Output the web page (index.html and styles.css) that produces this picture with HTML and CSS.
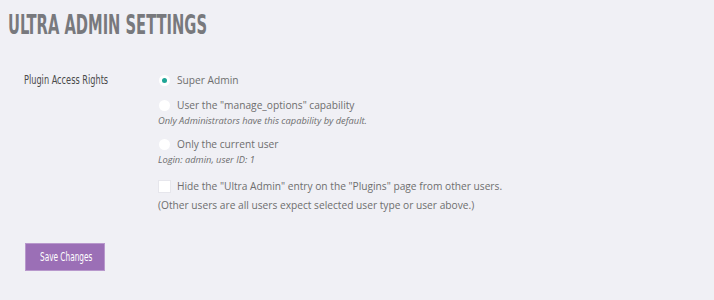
FILE: index.html
```html
<!DOCTYPE html>
<html>
<head>
<meta charset="utf-8">
<link rel="stylesheet" href="styles.css">
</head>
<body>
<div class="wrap">
  <h1 class="title"><span class="narrow">ULTRA ADMIN SETTINGS</span></h1>
  <div class="form-row">
    <div class="label"><span class="narrow">Plugin Access Rights</span></div>
    <div class="options">
      <label class="opt"><span class="radio checked"></span><span>Super Admin</span></label>
      <label class="opt opt-gap"><span class="radio"></span><span>User the "manage_options" capability</span></label>
      <div class="desc">Only Administrators have this capability by default.</div>
      <label class="opt opt-gap"><span class="radio"></span><span>Only the current user</span></label>
      <div class="desc">Login: admin, user ID: 1</div>
      <label class="opt opt-gap2"><span class="check"></span><span>Hide the "Ultra Admin" entry on the "Plugins" page from other users.</span></label>
      <div class="note">(Other users are all users expect selected user type or user above.)</div>
    </div>
  </div>
  <div class="actions">
    <button class="btn"><span class="narrow">Save Changes</span></button>
  </div>
</div>
</body>
</html>
```
FILE: styles.css
```css
html, body {
  margin: 0;
  padding: 0;
  background: #f0f0f5;
}
body {
  font-family: "Open Sans", "Liberation Sans", sans-serif;
  color: #6e6e6e;
}
.wrap {
  padding: 8px 8px 0 8px;
}
.narrow {
  display: inline-block;
  white-space: nowrap;
  transform-origin: left center;
}
.title {
  margin: 0;
  font-family: "DejaVu Sans Condensed", sans-serif;
  font-weight: bold;
  font-size: 27px;
  line-height: 34px;
  color: #78797d;
}
.title .narrow {
  transform: scaleX(0.605);
}
.form-row {
  display: flex;
  padding: 30px 0 0 16px;
}
.label {
  width: 134px;
  font-family: "DejaVu Sans Condensed", sans-serif;
  font-size: 13px;
  color: #4a4a4a;
  line-height: 16px;
}
.label .narrow {
  transform: scaleX(0.7);
}
.options {
  display: flex;
  flex-direction: column;
}
.opt {
  display: flex;
  align-items: center;
  font-size: 10.2px;
  line-height: 16px;
  color: #6e6e6e;
}
.opt-gap { margin-top: 9px; }
.opt-gap2 { margin-top: 12px; }
.radio {
  width: 11px;
  height: 11px;
  border-radius: 50%;
  background: #fff;
  margin: 0 7px 0 1px;
  position: relative;
  flex: none;
}
.radio.checked::after {
  content: "";
  position: absolute;
  left: 3px;
  top: 3px;
  width: 5px;
  height: 5px;
  border-radius: 50%;
  background: #1ea596;
}
.check {
  width: 11px;
  height: 11px;
  background: #fff;
  margin: 0 6px 0 0;
  flex: none;
  border: 1px solid #e6e6ec;
  box-sizing: content-box;
}
.desc {
  font-size: 9.3px;
  font-style: italic;
  line-height: 13px;
  margin-top: 1px;
  color: #6e6e6e;
}
.note {
  font-size: 10.2px;
  line-height: 16px;
  margin-top: 3px;
  color: #6e6e6e;
}
.actions {
  padding: 30px 0 0 17px;
}
.btn {
  background: #9b6fb6;
  border: 1px solid #b898cc;
  color: #fff;
  font-family: "DejaVu Sans Condensed", sans-serif;
  font-size: 12px;
  width: 80px;
  height: 28px;
  padding: 0 0 0 14px;
  text-align: left;
}
.btn .narrow {
  transform: scaleX(0.68);
}
```
